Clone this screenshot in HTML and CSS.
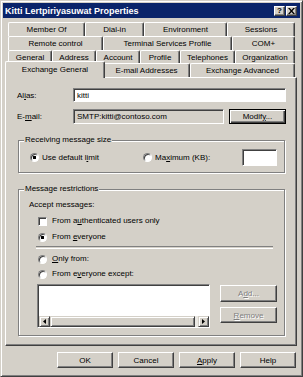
FILE: index.html
```
<!DOCTYPE html>
<html lang="en">
<head>
    <meta charset="utf-8">
    <title>Kitti Lertpiriyasuwat Properties</title>
    <link rel="stylesheet" href="styles.css">
</head>
<body>
    <div class="window">
        <div class="titlebar">
            <span class="title">Kitti Lertpiriyasuwat Properties</span>
            <span class="tbtn">?</span>
            <span class="tbtn close">
                <svg width="7" height="6" viewBox="0 0 7 6"><path d="M0 0h1.8L3.5 2 5.2 0H7L4.4 3 7 6H5.2L3.5 4 1.8 6H0l2.6-3z" fill="#000"/></svg>
            </span>
        </div>

        <div class="tabs">
            <div class="tab-row row1">
                <div class="tab">Member Of</div>
                <div class="tab">Dial-in</div>
                <div class="tab">Environment</div>
                <div class="tab">Sessions</div>
            </div>
            <div class="tab-row row2">
                <div class="tab">Remote control</div>
                <div class="tab">Terminal Services Profile</div>
                <div class="tab">COM+</div>
            </div>
            <div class="tab-row row3">
                <div class="tab">General</div>
                <div class="tab">Address</div>
                <div class="tab">Account</div>
                <div class="tab">Profile</div>
                <div class="tab">Telephones</div>
                <div class="tab">Organization</div>
            </div>
            <div class="tab-row row4">
                <div class="tab active">Exchange General</div>
                <div class="tab">E-mail Addresses</div>
                <div class="tab">Exchange Advanced</div>
            </div>
        </div>

        <div class="panel">
            <div class="field-row alias-row">
                <span class="label">Al<u>i</u>as:</span>
                <div class="textbox alias-box">kitti</div>
            </div>
            <div class="field-row email-row">
                <span class="label">E-<u>m</u>ail:</span>
                <div class="textbox readonly email-box">SMTP:kitti@contoso.com</div>
                <div class="btn default modify-btn"><span>Modif<u>y</u>...</span></div>
            </div>

            <div class="group size-group">
                <span class="legend">Receiving message size</span>
                <div class="size-row">
                    <div class="option first"><span class="radio checked"></span><span>Use default l<u>i</u>mit</span></div>
                    <div class="option"><span class="radio"></span><span>Ma<u>x</u>imum (KB):</span></div>
                    <div class="textbox size-box"></div>
                </div>
            </div>

            <div class="group restrict-group">
                <span class="legend">Message restrictions</span>
                <div class="line accept">Accept messages:</div>
                <div class="line choice"><span class="check"></span><span>From a<u>u</u>thenticated users only</span></div>
                <div class="line choice"><span class="radio checked"></span><span>From <u>e</u>veryone</span></div>
                <div class="sep"></div>
                <div class="line choice"><span class="radio"></span><span><u>O</u>nly from:</span></div>
                <div class="line choice"><span class="radio"></span><span>From e<u>v</u>eryone except:</span></div>
                <div class="list-row">
                    <div class="listbox">
                        <div class="list-body"></div>
                        <div class="hscroll">
                            <div class="sb-btn"><svg width="3" height="5" viewBox="0 0 3 5"><path d="M3 0v5L0 2.5z" fill="#000"/></svg></div>
                            <div class="sb-thumb"></div>
                            <div class="sb-track"></div>
                            <div class="sb-btn"><svg width="3" height="5" viewBox="0 0 3 5"><path d="M0 0v5L3 2.5z" fill="#000"/></svg></div>
                        </div>
                    </div>
                    <div class="side-btns">
                        <div class="btn disabled add-btn"><span>A<u>d</u>d...</span></div>
                        <div class="btn disabled remove-btn"><span><u>R</u>emove</span></div>
                    </div>
                </div>
            </div>
        </div>

        <div class="footer">
            <div class="btn">OK</div>
            <div class="btn">Cancel</div>
            <div class="btn"><span><u>A</u>pply</span></div>
            <div class="btn">Help</div>
        </div>
    </div>
</body>
</html>
```
FILE: styles.css
```
body {
    margin: 0;
    font-family: "Liberation Sans", Arial, sans-serif;
    font-size: 8px;
    color: #000;
    background-color: #d4d0c8;
}
.window {
    width: 303px;
    height: 377px;
    box-sizing: border-box;
    border: 1px solid;
    border-color: #d4d0c8 #404040 #404040 #d4d0c8;
    box-shadow: inset 1px 1px #fff, inset -1px -1px #808080;
    padding: 2px;
    background-color: #d4d0c8;
    display: flex;
    flex-direction: column;
}
.titlebar {
    height: 15px;
    background-color: #0a246a;
    display: flex;
    align-items: center;
    padding: 0 3px 0 2px;
}
.title {
    color: #fff;
    font-weight: bold;
    font-size: 9px;
    flex: 1;
}
.tbtn {
    width: 11px;
    height: 10px;
    box-sizing: border-box;
    border: 1px solid;
    border-color: #fff #404040 #404040 #fff;
    box-shadow: inset -1px -1px #808080;
    background-color: #d4d0c8;
    font-weight: bold;
    font-size: 8px;
    line-height: 8px;
    text-align: center;
    display: flex;
    align-items: center;
    justify-content: center;
}
.tbtn.close {
    margin-left: 1px;
}

/* tabs */
.tabs {
    margin-top: 4px;
    padding-left: 5px;
}
.tab-row {
    display: grid;
    height: 14px;
}
.row1 { grid-template-columns: 77px 59px 83px 68px; }
.row2 { grid-template-columns: 95px 129px 63px; }
.row3 { grid-template-columns: 44px 44px 44px 40px 55px 60px; height: 13px; }
.row4 { grid-template-columns: 95px 87px 105px; }
.tab {
    display: flex;
    align-items: center;
    justify-content: center;
    white-space: nowrap;
    border-top: 1px solid #fff;
    border-left: 1px solid #fff;
    border-right: 1px solid #404040;
    box-shadow: inset -1px 0 #808080;
    border-radius: 2px 2px 0 0;
    background-color: #d4d0c8;
}
.tab.active {
    margin: -2px -2px -1px -3px;
    position: relative;
    z-index: 1;
    padding-bottom: 2px;
}

/* page */
.panel {
    height: 269px;
    box-sizing: border-box;
    margin-left: 2px;
    width: 292px;
    border: 1px solid;
    border-color: #fff #404040 #404040 #fff;
    box-shadow: inset -1px -1px #808080;
    padding: 10px 10px 0 11px;
}
.field-row {
    display: flex;
    align-items: center;
}
.alias-row {
    height: 14px;
}
.email-row {
    height: 15px;
    margin-top: 7px;
}
.label {
    width: 56px;
    flex: none;
}
.textbox {
    box-sizing: border-box;
    height: 100%;
    border: 1px solid;
    border-color: #808080 #fff #fff #808080;
    box-shadow: inset 1px 1px #404040;
    background-color: #fff;
    padding-left: 3px;
    display: flex;
    align-items: center;
}
.alias-box {
    flex: 1;
}
.readonly {
    background-color: #d4d0c8;
}
.email-box {
    width: 151px;
}
.btn {
    box-sizing: border-box;
    border: 1px solid;
    border-color: #fff #404040 #404040 #fff;
    box-shadow: inset -1px -1px #808080;
    background-color: #d4d0c8;
    display: flex;
    align-items: center;
    justify-content: center;
}
.btn.default {
    border-color: #000;
    box-shadow: inset 1px 1px #fff, inset -1px -1px #404040, inset -2px -2px #808080;
}
.btn.disabled {
    color: #808080;
    text-shadow: 1px 1px #fff;
}
.modify-btn {
    width: 57px;
    height: 100%;
    margin-left: 5px;
}

/* group boxes */
.group {
    margin: 16px 1px 0 1px;
    border: 1px solid #808080;
    box-shadow: inset 1px 1px #fff, 1px 1px #fff;
    display: flex;
    flex-direction: column;
}
.legend {
    align-self: flex-start;
    line-height: 10px;
    margin: -6px 0 0 5px;
    padding: 0 1px;
    background-color: #d4d0c8;
}
.size-group {
    padding-bottom: 6px;
}
.size-row {
    display: flex;
    align-items: center;
    height: 17px;
    margin-top: 4px;
    padding: 0 7px 0 11px;
}
.option {
    display: flex;
    align-items: center;
}
.option.first {
    width: 113px;
}
.size-box {
    width: 35px;
    margin-left: auto;
}
.radio {
    width: 9px;
    height: 9px;
    box-sizing: border-box;
    border-radius: 50%;
    border: 1px solid;
    border-color: #808080 #fff #fff #808080;
    box-shadow: inset 1px 1px #404040;
    background-color: #fff;
    margin-right: 3px;
    flex: none;
}
.radio.checked {
    background: radial-gradient(circle, #000 1.4px, #fff 1.9px);
}
.check {
    width: 9px;
    height: 9px;
    box-sizing: border-box;
    border: 1px solid;
    border-color: #808080 #fff #fff #808080;
    box-shadow: inset 1px 1px #404040;
    background-color: #fff;
    margin-right: 5px;
    flex: none;
}
.restrict-group {
    padding-bottom: 7px;
}
.line {
    height: 10px;
    line-height: 10px;
    display: flex;
    align-items: center;
    margin-top: 6px;
}
.accept {
    margin-left: 10px;
}
.choice {
    margin-left: 19px;
}
.choice .radio {
    margin-right: 5px;
}
.sep {
    height: 1px;
    margin: 4px 0 0 17px;
    width: 237px;
    border-top: 1px solid #808080;
    border-bottom: 1px solid #fff;
}
.sep + .line {
    margin-top: 5px;
}
.sep + .line + .line {
    margin-top: 5px;
}
.list-row {
    display: flex;
    margin-top: 5px;
    padding-left: 18px;
}
.listbox {
    width: 173px;
    height: 44px;
    box-sizing: border-box;
    border: 1px solid;
    border-color: #808080 #fff #fff #808080;
    box-shadow: inset 1px 1px #404040;
    padding: 1px 0 0 1px;
    display: flex;
    flex-direction: column;
}
.list-body {
    flex: 1;
    background-color: #fff;
}
.hscroll {
    height: 11px;
    display: flex;
}
.sb-btn {
    width: 11px;
    box-sizing: border-box;
    border: 1px solid;
    border-color: #d4d0c8 #404040 #404040 #d4d0c8;
    box-shadow: inset 1px 1px #fff, inset -1px -1px #808080;
    background-color: #d4d0c8;
    display: flex;
    align-items: center;
    justify-content: center;
}
.sb-thumb {
    flex: 1;
    border: 1px solid;
    border-color: #d4d0c8 #404040 #404040 #d4d0c8;
    box-shadow: inset 1px 1px #fff, inset -1px -1px #808080;
    background-color: #d4d0c8;
}
.sb-track {
    width: 3px;
    background-color: #ebe9e4;
}
.side-btns {
    margin-left: 10px;
    display: flex;
    flex-direction: column;
}
.add-btn {
    width: 57px;
    height: 17px;
    margin-top: 1px;
}
.remove-btn {
    width: 57px;
    height: 16px;
    margin-top: 5px;
}

/* dialog buttons */
.footer {
    display: flex;
    justify-content: flex-end;
    gap: 5px;
    margin-top: 6px;
    padding-right: 4px;
}
.footer .btn {
    width: 56px;
    height: 16px;
}
```
